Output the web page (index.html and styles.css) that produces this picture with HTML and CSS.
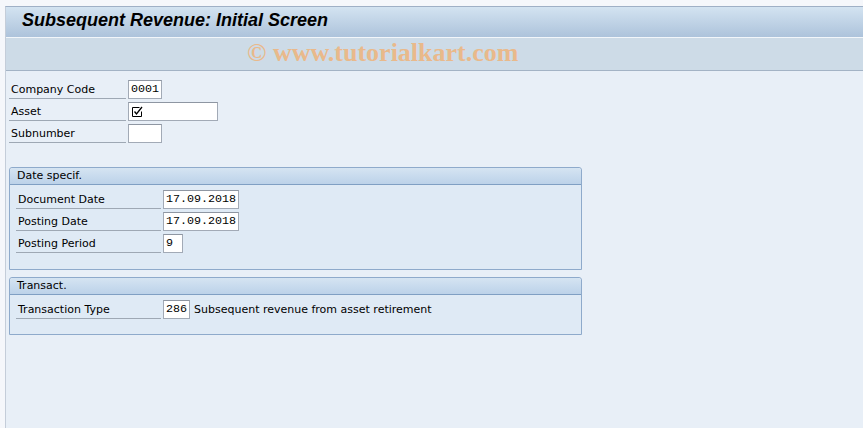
FILE: index.html
```html
<!DOCTYPE html>
<html lang="en">
	<head>
		<title>Subsequent Revenue: Initial Screen</title>
		<meta name="viewport" content="width=device-width, initial-scale=1" />
		<link rel="stylesheet" href="styles.css">
	</head>
	<body>
		<div class="screen">
			<div class="titlebar">Subsequent Revenue: Initial Screen</div>
			<div class="toolbar">
				<span class="mark">© www.tutorialkart.com</span>
			</div>
			<main class="content">
				<div class="row">
					<label class="label">Company Code</label>
					<div class="field w4">0001</div>
				</div>
				<div class="row">
					<label class="label">Asset</label>
					<div class="field w12">
						<svg class="req" width="11" height="11" viewBox="0 0 11 11">
							<path d="M0.5 1.5h7M0.5 1.5v9h9v-5" fill="none" stroke="#000" stroke-width="1" />
							<path d="M2.5 5.5l2 2.5 5.5-7" fill="none" stroke="#000" stroke-width="1.3" />
						</svg>
					</div>
				</div>
				<div class="row">
					<label class="label">Subnumber</label>
					<div class="field w4"></div>
				</div>

				<section class="group first">
					<div class="group-head">Date specif.</div>
					<div class="group-body">
						<div class="row">
							<label class="label">Document Date</label>
							<div class="field w10">17.09.2018</div>
						</div>
						<div class="row">
							<label class="label">Posting Date</label>
							<div class="field w10">17.09.2018</div>
						</div>
						<div class="row">
							<label class="label">Posting Period</label>
							<div class="field w2">9</div>
						</div>
					</div>
				</section>

				<section class="group">
					<div class="group-head">Transact.</div>
					<div class="group-body short">
						<div class="row">
							<label class="label">Transaction Type</label>
							<div class="field w3">286</div>
							<span class="desc">Subsequent revenue from asset retirement</span>
						</div>
					</div>
				</section>
			</main>
		</div>
	</body>
</html>
```

FILE: styles.css
```css
html,
body {
	margin: 0;
	padding: 0;
}

body {
	background: #f5f7fb;
	color: #000000;
	font-family: "DejaVu Sans", Tahoma, sans-serif;
	font-size: 11px;
	height: 428px;
	overflow: hidden;
}

.screen {
	background: #e8eff7;
	border-left: 1px solid #c4cdd9;
	border-top: 1px solid #9fb0c6;
	height: 421px;
	margin: 6px 0 0 5px;
}

.titlebar {
	background: linear-gradient(#d3e3f1, #adc3db);
	border-bottom: 1px solid #f2f6fa;
	font-family: "Liberation Sans", Arial, sans-serif;
	font-size: 18px;
	font-style: italic;
	font-weight: bold;
	height: 30px;
	line-height: 26px;
	padding-left: 16px;
}

.toolbar {
	background: #cddbe7;
	border-bottom: 1px solid #a3b3c5;
	height: 32px;
	line-height: 30px;
	padding-left: 241px;
}

.mark {
	color: #e9b98b;
	font-family: "Liberation Serif", "Times New Roman", serif;
	font-size: 26px;
	font-weight: bold;
}

.content {
	padding: 9px 0 0 3px;
}

.row {
	display: flex;
	height: 19px;
	margin-bottom: 3px;
}

.label {
	border-bottom: 1px solid #9ea8b4;
	box-sizing: border-box;
	line-height: 19px;
	margin-right: 2px;
	padding-left: 2px;
	width: 117px;
}

.field {
	background: #ffffff;
	border: 1px solid #a2aab6;
	border-top-color: #8e96a2;
	box-sizing: border-box;
	font-family: "Liberation Mono", "Courier New", monospace;
	font-size: 11.7px;
	line-height: 17px;
	padding-left: 2px;
}

.w2 { width: 20px; }
.w3 { width: 27px; }
.w4 { width: 34px; }
.w10 { width: 76px; }
.w12 { width: 90px; }

.req {
	display: block;
	margin: 3px 0 0 1px;
}

.group {
	border: 1px solid #8eaacb;
	border-radius: 3px 3px 0 0;
	margin-bottom: 7px;
	width: 571px;
}

.group.first {
	margin-top: 24px;
}

.group-head {
	background: linear-gradient(#d5e4f2, #bcd2e9);
	border-bottom: 1px solid #7f9fc3;
	border-radius: 3px 3px 0 0;
	height: 16px;
	line-height: 16px;
	padding-left: 7px;
}

.group-body {
	background: #dfeaf5;
	padding: 5px 0 13px 6px;
}

.group-body.short {
	padding-bottom: 12px;
}

.group-body .label {
	width: 145px;
}

.desc {
	line-height: 19px;
	padding-left: 4px;
}
```
